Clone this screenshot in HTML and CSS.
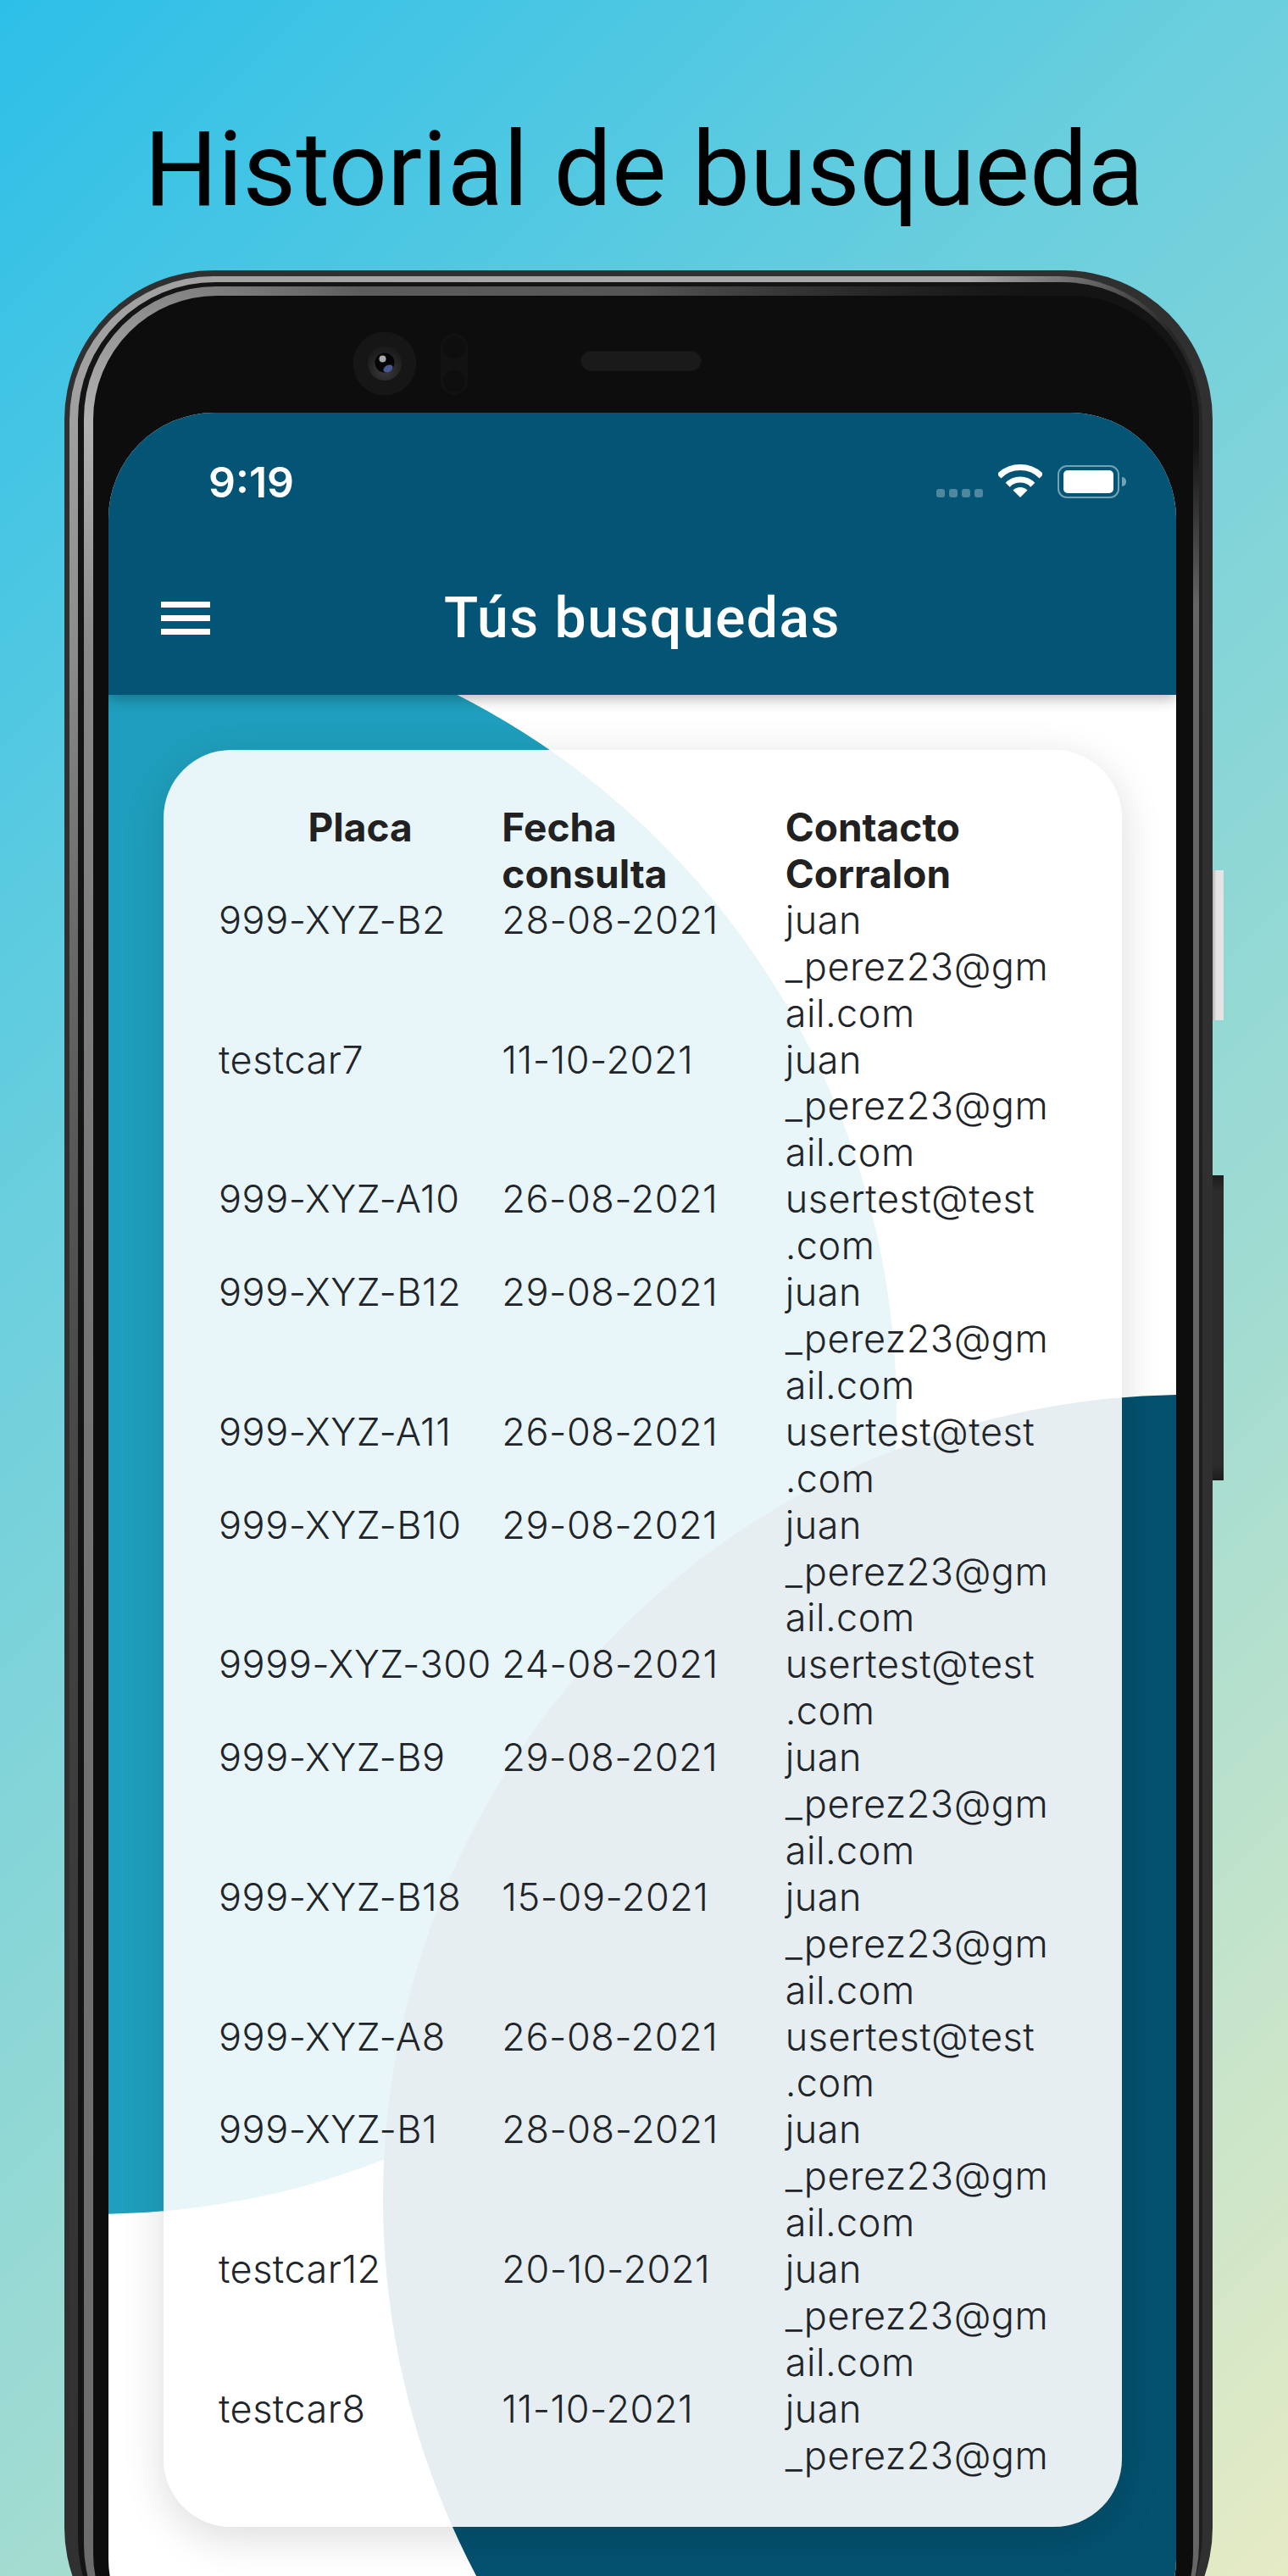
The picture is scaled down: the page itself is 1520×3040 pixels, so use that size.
FILE: index.html
```html
<!DOCTYPE html>
<html lang="en">
<head>
    <meta charset="UTF-8">
    <meta name="viewport" content="width=device-width, initial-scale=1.0">
    <title>Historial de busqueda</title>
    <link rel="stylesheet" href="styles.css">
</head>
<body>
    <div class="page">
        <h1 class="page-title">Historial de busqueda</h1>

        <div class="phone">
            <div class="side-button side-button-light"></div>
            <div class="side-button side-button-dark"></div>
            <div class="frame-outer">
                <div class="frame-gap">
                    <div class="frame-inner">
                        <div class="bezel">
                            <div class="bezel-top">
                                <svg class="camera" width="136" height="76" viewBox="0 0 136 76">
                                    <defs>
                                        <radialGradient id="ringGrad" cx="50%" cy="70%" r="60%">
                                            <stop offset="0%" stop-color="#3a3a3c"/>
                                            <stop offset="100%" stop-color="#1c1c1d"/>
                                        </radialGradient>
                                    </defs>
                                    <circle cx="37" cy="38" r="37.5" fill="#161616"/>
                                    <circle cx="37" cy="38" r="20" fill="url(#ringGrad)"/>
                                    <circle cx="37" cy="37" r="11.5" fill="#050508"/>
                                    <ellipse cx="41" cy="44" rx="6" ry="4" fill="#4a5890" transform="rotate(-30 41 44)"/>
                                    <circle cx="34.5" cy="32.5" r="4" fill="#a9a9a9"/>
                                    <rect x="103" y="3" width="32" height="72" rx="16" fill="#121212"/>
                                    <circle cx="119" cy="19" r="13" fill="#0e0e0e"/>
                                    <circle cx="119" cy="59" r="13" fill="#0e0e0e"/>
                                </svg>
                                <div class="speaker"></div>
                            </div>
                            <div class="screen">
                                <div class="circle circle-light"></div>
                                <div class="circle circle-dark"></div>

                                <header class="app-header">
                                    <div class="status-bar">
                                        <span class="clock">9:19</span>
                                        <div class="status-icons">
                                            <div class="signal">
                                                <span></span><span></span><span></span><span></span>
                                            </div>
                                            <svg class="wifi" width="52" height="39" viewBox="0 0 52 39">
                                                <path d="M0.9 13.9A35.5 35.5 0 0 1 51.1 13.9" fill="none" stroke="#fff" stroke-width="7"/>
                                                <path d="M11.2 24.2A21 21 0 0 1 40.8 24.2" fill="none" stroke="#fff" stroke-width="7"/>
                                                <path d="M26 39L17.5 30.5A12 12 0 0 1 34.5 30.5Z" fill="#fff"/>
                                            </svg>
                                            <div class="battery">
                                                <div class="battery-body"><div class="battery-fill"></div></div>
                                                <div class="battery-nub"></div>
                                            </div>
                                        </div>
                                    </div>
                                    <div class="toolbar">
                                        <div class="menu-icon"><span></span><span></span><span></span></div>
                                        <div class="toolbar-title">Tús busquedas</div>
                                        <div class="toolbar-spacer"></div>
                                    </div>
                                </header>

                                <div class="card">
                                    <div class="table-clip">
                                        <table class="history">
                                            <thead>
                                                <tr>
                                                    <th class="center">Placa</th>
                                                    <th>Fecha<br>consulta</th>
                                                    <th>Contacto<br>Corralon</th>
                                                </tr>
                                            </thead>
                                            <tbody>
                                                <tr><td>999-XYZ-B2</td><td>28-08-2021</td><td>juan<br>_perez23@gm<br>ail.com</td></tr>
                                                <tr><td>testcar7</td><td>11-10-2021</td><td>juan<br>_perez23@gm<br>ail.com</td></tr>
                                                <tr><td>999-XYZ-A10</td><td>26-08-2021</td><td>usertest@test<br>.com</td></tr>
                                                <tr><td>999-XYZ-B12</td><td>29-08-2021</td><td>juan<br>_perez23@gm<br>ail.com</td></tr>
                                                <tr><td>999-XYZ-A11</td><td>26-08-2021</td><td>usertest@test<br>.com</td></tr>
                                                <tr><td>999-XYZ-B10</td><td>29-08-2021</td><td>juan<br>_perez23@gm<br>ail.com</td></tr>
                                                <tr><td>9999-XYZ-300</td><td>24-08-2021</td><td>usertest@test<br>.com</td></tr>
                                                <tr><td>999-XYZ-B9</td><td>29-08-2021</td><td>juan<br>_perez23@gm<br>ail.com</td></tr>
                                                <tr><td>999-XYZ-B18</td><td>15-09-2021</td><td>juan<br>_perez23@gm<br>ail.com</td></tr>
                                                <tr><td>999-XYZ-A8</td><td>26-08-2021</td><td>usertest@test<br>.com</td></tr>
                                                <tr><td>999-XYZ-B1</td><td>28-08-2021</td><td>juan<br>_perez23@gm<br>ail.com</td></tr>
                                                <tr><td>testcar12</td><td>20-10-2021</td><td>juan<br>_perez23@gm<br>ail.com</td></tr>
                                                <tr><td>testcar8</td><td>11-10-2021</td><td>juan<br>_perez23@gm</td></tr>
                                            </tbody>
                                        </table>
                                    </div>
                                </div>
                            </div>
                        </div>
                    </div>
                </div>
            </div>
        </div>
    </div>
</body>
</html>
```

FILE: styles.css
```css
html, body {
    margin: 0;
    padding: 0;
}
.page {
    width: 1520px;
    height: 3040px;
    overflow: hidden;
    background: linear-gradient(135deg, #2dbfe8 0%, #6ccfdd 33%, #a3dcd1 67%, #e6ebc4 100%);
}
.page-title {
    margin: 0;
    height: 319px;
    box-sizing: border-box;
    padding-top: 128px;
    font-family: Roboto, sans-serif;
    font-size: 121.5px;
    font-weight: 400;
    line-height: 146px;
    color: #000;
    text-align: center;
}

/* phone frame */
.phone {
    position: relative;
    width: 1355px;
    height: 2840px;
    margin-left: 76px;
    box-sizing: border-box;
    padding: 7px 12px 0 6px;
    background: #303030;
    border-radius: 176px;
}
.side-button {
    position: absolute;
    left: 1355px;
    width: 13px;
}
.side-button-light {
    top: 708px;
    height: 177px;
    background: linear-gradient(90deg, #b5b5b5, #e4e4e4 35%, #e4e4e4 100%);
}
.side-button-dark {
    top: 1068px;
    height: 360px;
    background: linear-gradient(180deg, #1c1c1c, #2c2c2c 5%, #2c2c2c 95%, #1c1c1c);
}
.frame-outer {
    height: 100%;
    box-sizing: border-box;
    padding: 7px 4px 0 10px;
    background: conic-gradient(at 50% 400px, #a8a8a8 0deg, #a8a8a8 45deg, #262626 62deg, #1c1c1c 180deg, #8a8a8a 265deg, #a0a0a0 290deg, #a8a8a8 360deg);
    border-radius: 170px;
}
.frame-gap {
    height: 100%;
    box-sizing: border-box;
    padding: 5px 0 0 7px;
    background: #141414;
    border-radius: 162px;
}
.frame-inner {
    height: 100%;
    box-sizing: border-box;
    padding: 11px 7px 0 11px;
    background: conic-gradient(at 50% 400px, #555 0deg, #141414 49deg, #141414 72deg, #666 88deg, #666 180deg, #8a8a8a 268deg, #b2b2b2 290deg, #5c5c5c 320deg, #555 360deg);
    border-radius: 156px;
}
.bezel {
    height: 100%;
    box-sizing: border-box;
    padding: 0 20px 0 18px;
    background: #0d0d0d;
    border-radius: 146px;
}
.bezel-top {
    display: flex;
    align-items: flex-start;
    height: 138px;
    box-sizing: border-box;
    padding: 42px 0 0 289px;
}
.camera {
    display: block;
}
.speaker {
    width: 143px;
    height: 24px;
    margin: 23px 0 0 132px;
    background: #1a1a1a;
    border: 1px solid #151515;
    box-sizing: border-box;
    border-radius: 12px;
}

/* screen */
.screen {
    position: relative;
    height: 2658px;
    overflow: hidden;
    background: #fff;
    border-radius: 125px;
}
.circle {
    position: absolute;
    border-radius: 50%;
}
.circle-light {
    left: -966px;
    top: 230px;
    width: 1896px;
    height: 1896px;
    background: #1f9fbd;
}
.circle-dark {
    left: 324px;
    top: 1159px;
    width: 1900px;
    height: 1900px;
    background: #04516f;
}
.app-header {
    position: relative;
    height: 333px;
    background: #035475;
    box-shadow: 0 4px 16px rgba(0, 0, 0, 0.3);
}
.status-bar {
    display: flex;
    justify-content: space-between;
    align-items: flex-start;
    height: 160px;
    box-sizing: border-box;
    padding: 52px 59px 0 118px;
}
.clock {
    font-family: Inter, sans-serif;
    font-size: 50px;
    font-weight: 600;
    line-height: 60px;
    color: #fff;
}
.status-icons {
    display: flex;
    align-items: flex-start;
    margin-top: 9px;
}
.signal {
    display: flex;
    gap: 5px;
    margin: 29px 18px 0 0;
}
.signal span {
    width: 10px;
    height: 10px;
    border-radius: 3px;
    background: rgba(255, 255, 255, 0.3);
}
.wifi {
    display: block;
}
.battery {
    display: flex;
    align-items: center;
    margin-left: 18px;
    margin-top: 1px;
}
.battery-body {
    width: 73px;
    height: 39px;
    box-sizing: border-box;
    padding: 4px 5px;
    border: 2px solid rgba(255, 255, 255, 0.45);
    border-radius: 11px;
}
.battery-fill {
    height: 100%;
    background: #fff;
    border-radius: 5px;
}
.battery-nub {
    width: 5px;
    height: 11px;
    margin-left: 3px;
    background: rgba(255, 255, 255, 0.45);
    border-radius: 0 6px 6px 0;
}
.toolbar {
    display: flex;
    align-items: center;
    height: 173px;
    box-sizing: border-box;
    padding: 0 62px;
}
.menu-icon {
    display: flex;
    flex-direction: column;
    gap: 9px;
    width: 58px;
    margin-bottom: 8px;
}
.menu-icon span {
    height: 7px;
    background: #fff;
}
.toolbar-title {
    flex: 1;
    margin-bottom: 8px;
    font-family: Roboto, sans-serif;
    font-size: 66px;
    font-weight: 500;
    letter-spacing: 1.5px;
    color: #fff;
    text-align: center;
}
.toolbar-spacer {
    width: 58px;
}

/* history card */
.card {
    position: relative;
    margin: 65px 64px 0 65px;
    padding: 64px 65px 57px;
    background: rgba(255, 255, 255, 0.9);
    border-radius: 80px;
    box-shadow: 0 12px 50px rgba(0, 0, 0, 0.14);
}
.table-clip {
    height: 1976px;
    overflow: hidden;
}
.history {
    width: 1003px;
    border-collapse: collapse;
    table-layout: fixed;
    font-family: Inter, sans-serif;
    font-size: 45px;
    line-height: 54.9px;
    color: #212529;
}
.history th, .history td {
    padding: 0;
    vertical-align: top;
    text-align: left;
    white-space: nowrap;
}
.history th {
    font-size: 46px;
    font-weight: 700;
    color: #212121;
}
.history th.center {
    text-align: center;
}
.history td {
    font-weight: 350;
    letter-spacing: 0.5px;
}
```
